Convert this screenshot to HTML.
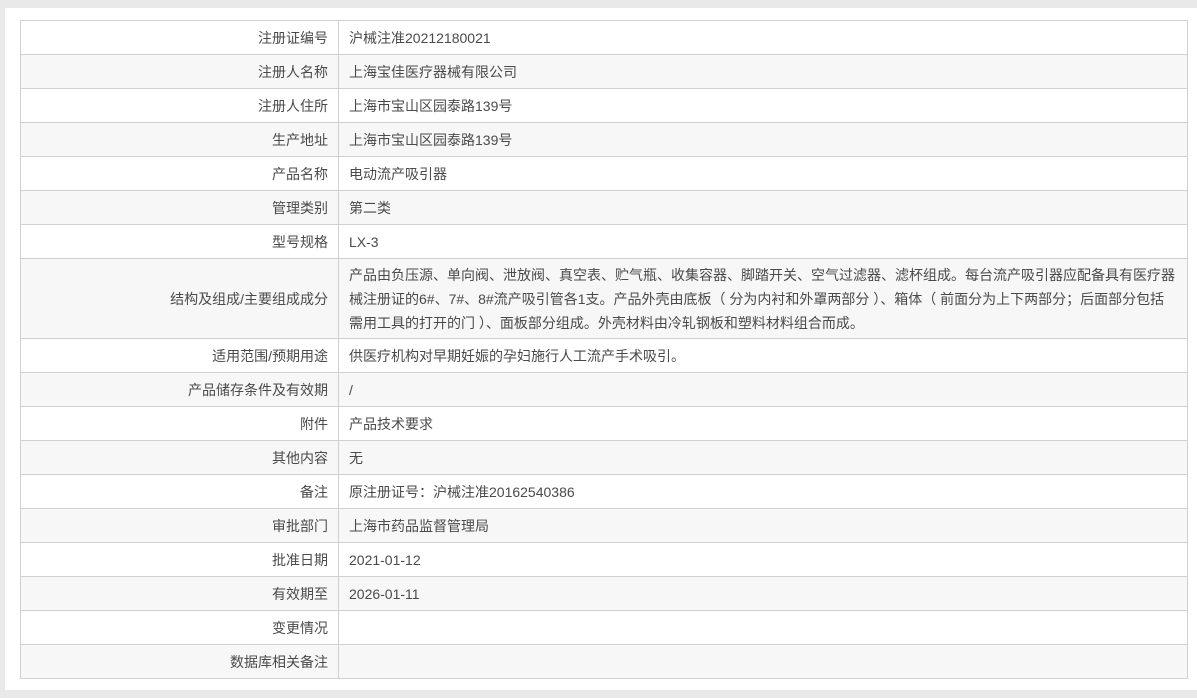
<!DOCTYPE html>
<html><head><meta charset="utf-8"><style>
html,body{margin:0;padding:0;background:#e9e9e9;width:1197px;height:698px;overflow:hidden}
.panel{position:absolute;left:5px;top:8px;width:1192px;height:682px;background:#fff}
table{position:absolute;left:20px;top:20px;width:1168px;border-collapse:collapse;font-family:"Liberation Sans","Noto Sans CJK SC",sans-serif;font-size:14px;color:#4a4a4a}
td{border:1px solid #d0d0d0;height:33px;padding:0 4px 0 10px;line-height:24px}
td.l{width:297px;text-align:right;padding-right:10px;padding-left:10px}
tr:nth-child(even) td{background:#f7f7f7}
</style></head><body>
<div class="panel"></div>
<table>
<tr><td class="l">注册证编号</td><td>沪械注准20212180021</td></tr>
<tr><td class="l">注册人名称</td><td>上海宝佳医疗器械有限公司</td></tr>
<tr><td class="l">注册人住所</td><td>上海市宝山区园泰路139号</td></tr>
<tr><td class="l">生产地址</td><td>上海市宝山区园泰路139号</td></tr>
<tr><td class="l">产品名称</td><td>电动流产吸引器</td></tr>
<tr><td class="l">管理类别</td><td>第二类</td></tr>
<tr><td class="l">型号规格</td><td>LX-3</td></tr>
<tr><td class="l" style="height:79px">结构及组成/主要组成成分</td><td style="padding-top:2px;padding-bottom:2px;white-space:nowrap">产品由负压源、单向阀、泄放阀、真空表、贮气瓶、收集容器、脚踏开关、空气过滤器、滤杯组成。每台流产吸引器应配备具有医疗器<br>械注册证的6#、7#、8#流产吸引管各1支。产品外壳由底板（ 分为内衬和外罩两部分 ）、箱体（ 前面分为上下两部分；后面部分包括<br>需用工具的打开的门 ）、面板部分组成。外壳材料由冷轧钢板和塑料材料组合而成。</td></tr>
<tr><td class="l">适用范围/预期用途</td><td>供医疗机构对早期妊娠的孕妇施行人工流产手术吸引。</td></tr>
<tr><td class="l">产品储存条件及有效期</td><td>/</td></tr>
<tr><td class="l">附件</td><td>产品技术要求</td></tr>
<tr><td class="l">其他内容</td><td>无</td></tr>
<tr><td class="l">备注</td><td>原注册证号：沪械注准20162540386</td></tr>
<tr><td class="l">审批部门</td><td>上海市药品监督管理局</td></tr>
<tr><td class="l">批准日期</td><td>2021-01-12</td></tr>
<tr><td class="l">有效期至</td><td>2026-01-11</td></tr>
<tr><td class="l">变更情况</td><td></td></tr>
<tr><td class="l">数据库相关备注</td><td></td></tr>
</table>
</body></html>
